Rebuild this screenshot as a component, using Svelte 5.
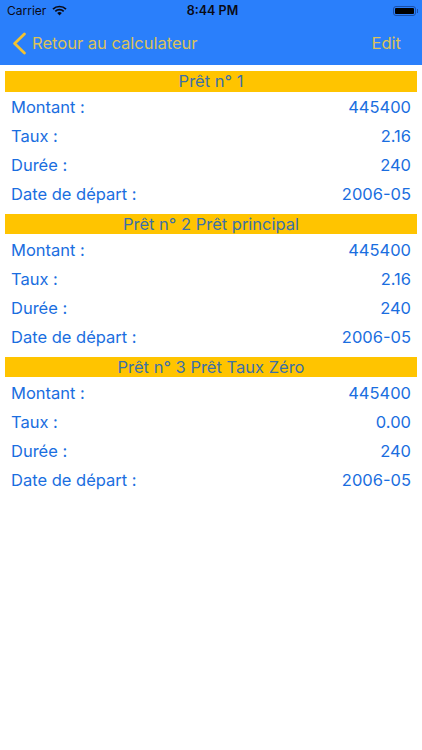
<script>
  const loans = [
    { title: 'Prêt n° 1', rate: '2.16' },
    { title: 'Prêt n° 2 Prêt principal', rate: '2.16' },
    { title: 'Prêt n° 3 Prêt Taux Zéro', rate: '0.00' }
  ];
</script>

<div class="screen">
  <header class="bar">
    <div class="status">
      <div class="status-left">
        <span>Carrier</span>
        <svg width="15" height="11" viewBox="0 0 15 11">
          <path d="M1 4.2a9.2 9.2 0 0 1 13 0" fill="none" stroke="#0a0a14" stroke-width="1.7" />
          <path d="M3.3 6.4a6 6 0 0 1 8.4 0" fill="none" stroke="#0a0a14" stroke-width="1.7" />
          <path d="M5.2 8.1a3.2 3.2 0 0 1 4.6 0L7.5 10.5z" fill="#0a0a14" />
        </svg>
      </div>
      <span class="clock">8:44 PM</span>
      <div class="battery">
        <div class="cell"><div class="charge"></div></div>
        <div class="nub"></div>
      </div>
    </div>
    <nav class="nav">
      <div class="back">
        <svg width="14" height="23" viewBox="0 0 14 23">
          <path d="M12.4 2 L2.6 11.5 L12.4 21" fill="none" stroke="#f2c230" stroke-width="2.8" stroke-linecap="round" stroke-linejoin="round" />
        </svg>
        <span>Retour au calculateur</span>
      </div>
      <span class="edit">Edit</span>
    </nav>
  </header>

  <main class="list">
    {#each loans as loan}
      <section>
        <h2>{loan.title}</h2>
        <div class="row"><span>Montant :</span><span>445400</span></div>
        <div class="row"><span>Taux :</span><span>{loan.rate}</span></div>
        <div class="row"><span>Durée :</span><span>240</span></div>
        <div class="row"><span>Date de départ :</span><span>2006-05</span></div>
      </section>
    {/each}
  </main>
</div>

<style>
  :global(body) {
    margin: 0;
    background: #fff;
  }
  .screen {
    width: 422px;
    height: 750px;
    overflow: hidden;
    font-family: Inter, "Liberation Sans", sans-serif;
  }
  .bar {
    background: #2a7ffb;
    height: 65px;
  }
  .status {
    height: 21px;
    padding: 0 4px 0 7px;
    display: grid;
    grid-template-columns: 1fr auto 1fr;
    align-items: center;
    font-size: 12px;
    color: #0a0a14;
  }
  .status-left {
    display: flex;
    align-items: center;
    gap: 6px;
  }
  .clock {
    font-weight: 600;
    font-size: 12.5px;
  }
  .battery {
    display: flex;
    align-items: center;
    justify-content: flex-end;
    gap: 1px;
  }
  .cell {
    width: 23px;
    height: 10px;
    border: 1px solid #1a4fa8;
    border-radius: 3px;
    padding: 1px;
    box-sizing: border-box;
  }
  .charge {
    height: 100%;
    background: #000;
    border-radius: 1px;
  }
  .nub {
    width: 1px;
    height: 4px;
    background: #1a4fa8;
  }
  .nav {
    height: 44px;
    display: flex;
    align-items: center;
    justify-content: space-between;
    padding: 0 21px 0 12px;
    color: #dcc25a;
    font-size: 16.5px;
  }
  .back {
    display: flex;
    align-items: center;
    gap: 6px;
  }
  .list {
    padding: 6px 5px 0;
  }
  h2 {
    margin: 0 0 1.5px;
    height: 20.5px;
    line-height: 20.5px;
    background: #ffc400;
    color: #3c70a8;
    font-size: 16.5px;
    font-weight: 400;
    text-align: center;
  }
  section {
    margin-bottom: 5.8px;
  }
  .row {
    height: 28.8px;
    display: flex;
    align-items: center;
    justify-content: space-between;
    padding: 0 6px;
    color: #1a6ee0;
    font-size: 16.5px;
  }
</style>
